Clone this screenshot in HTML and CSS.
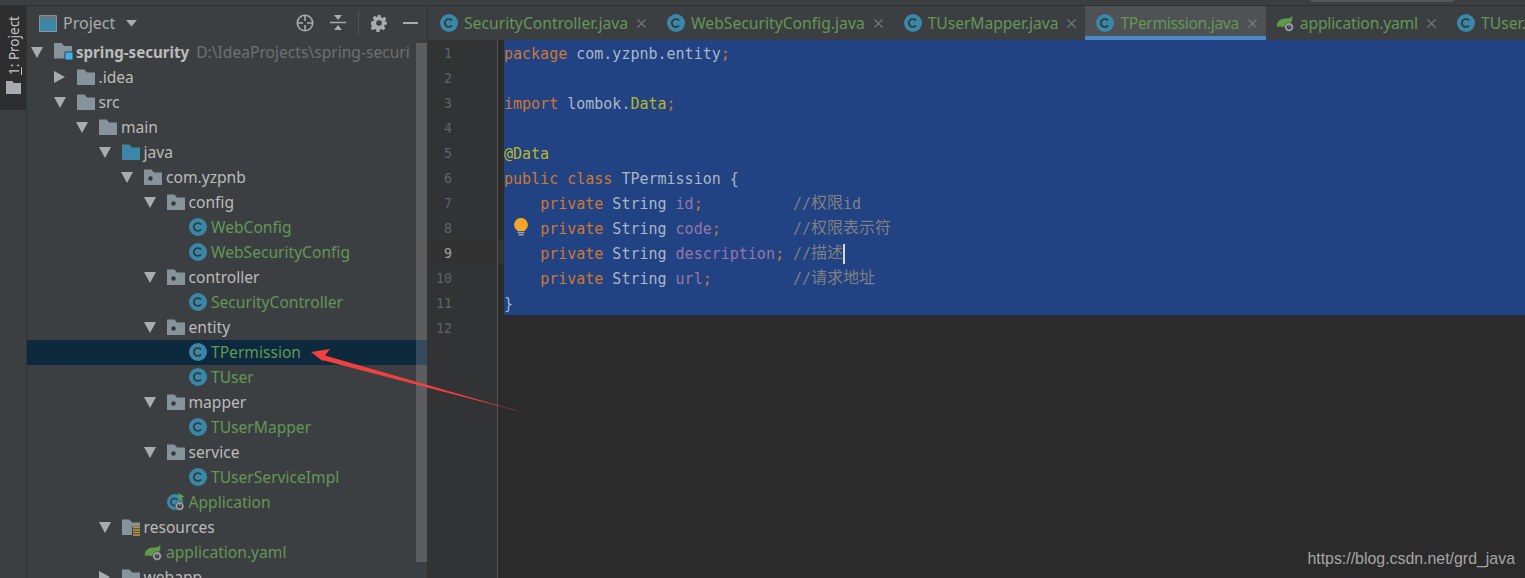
FILE: index.html
```html
<!DOCTYPE html>
<html lang="en">
<head>
<meta charset="utf-8">
<title>TPermission.java</title>
<link rel="stylesheet" href="styles.css">
</head>
<body>
<svg class="defs" width="0" height="0" aria-hidden="true">
  <defs>
    <symbol id="cls" viewBox="0 0 18 18">
      <circle cx="9" cy="9" r="9" fill="#3a87a8"/>
      <path d="M12 6.600A4 4 0 1 0 12 11.400" fill="none" stroke="#2f363a" stroke-width="1.700"/>
    </symbol>
    <symbol id="folder" viewBox="0 0 18 18">
      <path d="M0 1.500h7.500l2.500 3h8v12.500H0z" fill="#87939a"/>
    </symbol>
    <symbol id="folder-blue" viewBox="0 0 18 18">
      <path d="M0 1.500h7.500l2.500 3h8v12.500H0z" fill="#3a87a8"/>
    </symbol>
    <symbol id="pkg" viewBox="0 0 18 18">
      <path d="M0 1.500h7.500l2.500 3h8v12.500H0z" fill="#87939a"/>
      <circle cx="6.500" cy="10.500" r="2.200" fill="#35383a"/>
    </symbol>
    <symbol id="root" viewBox="0 0 20 18">
      <path d="M0 0h7.500l2.500 3h8v12.500H0z" fill="#87939a"/>
      <path d="M11 9h8v8h-8z" fill="#3db5ea" stroke="#3c3f41"/>
    </symbol>
    <symbol id="res" viewBox="0 0 18 18">
      <path d="M0 1.500h7.500l2.500 3h8v12.500H0z" fill="#87939a"/>
      <path d="M10 8.500h8v9h-8z" fill="#3c3f41"/>
      <path d="M11 9.500h7M11 12h7M11 14.500h7M11 17h7" stroke="#c39a3c" stroke-width="1.500"/>
    </symbol>
    <symbol id="gear-badge" viewBox="0 0 10 10">
      <circle cx="5" cy="5" r="4.500" fill="#9aa1a5" stroke="#3c3f41" stroke-width=".6"/>
      <circle cx="5" cy="5" r="2.400" fill="#3c3f41"/>
      <path d="M5 3v2" stroke="#9aa1a5"/>
    </symbol>
    <symbol id="spring" viewBox="0 0 20 20">
      <path d="M1 13C1 7 7 5 11 5s6-1 7-3c1 5-1 8-3 10-3 2-7 3-10 2-2 0-3 0-4 1z" fill="#5d9b47"/>
      <use href="#gear-badge" x="9" y="9" width="11" height="11"/>
    </symbol>
    <symbol id="app" viewBox="0 0 20 20">
      <circle cx="9" cy="10" r="9" fill="#3a87a8"/>
      <path d="M11.500 7.600A4 4 0 1 0 11.500 12.400" fill="none" stroke="#2f363a" stroke-width="1.600"/>
      <path d="M13 0l6 4-6 4z" fill="#59a83c"/>
      <use href="#gear-badge" x="8.500" y="9" width="11" height="11"/>
    </symbol>
    <symbol id="close" viewBox="0 0 10 10">
      <path d="M.5.500l9 9M9.500.500l-9 9" stroke="#7d8082" stroke-width="1.200" fill="none"/>
    </symbol>
  </defs>
</svg>
<div class="app">
  <div class="topline"><div class="topline-bar"></div></div>
  <div class="main">
    <aside class="stripe">
      <div class="stripe-btn">
        <span class="stripe-label"><u>1</u>: Project</span>
        <svg class="stripe-icon" viewBox="0 0 15 13"><path d="M0 0h6l2 2h7v11H0z" fill="#a9acae"/></svg>
      </div>
    </aside>
    <section class="panel">
      <header class="panel-head">
        <svg class="head-proj" viewBox="0 0 18 17"><path d="M.5.500h17v16H.5z" fill="#3a87a8" stroke="#8a9196"/><path d="M1 1h16v3H1z" fill="#6d7478"/></svg>
        <span class="head-title">Project</span>
        <svg class="head-caret" viewBox="0 0 11 7"><path d="M0 0h11L5.500 6.500z" fill="#a9acae"/></svg>
        <span class="head-tools">
          <svg class="tool" viewBox="0 0 18 18"><circle cx="9" cy="9" r="7.700" fill="none" stroke="#a9acae" stroke-width="1.600"/><path d="M9 1v6M9 11v6M1 9h6M11 9h6" stroke="#a9acae" stroke-width="1.600"/></svg>
          <svg class="tool tool-collapse" viewBox="0 0 16 18"><path d="M0 8.500h16" stroke="#a9acae" stroke-width="1.500"/><path d="M4 1h8L8 6zM4 16h8l-4-5z" fill="#a9acae"/></svg>
          <span class="tool-sep"></span>
          <svg class="tool tool-gear" viewBox="0 0 16 16"><path d="M6.500 0h3l.4 2.300 1.500.7 2-1.300 2 2-1.300 2 .6 1.500L16 6.600v2.800l-2.300.4-.6 1.500 1.300 2-2 2-2-1.300-1.500.6-.4 2.400h-3l-.4-2.400-1.500-.6-2 1.300-2-2 1.300-2-.6-1.500L0 9.400V6.600l2.300-.4.6-1.500-1.300-2 2-2 2 1.300 1.500-.7z" fill="#a9acae"/><circle cx="8" cy="8" r="2.800" fill="#3c3f41"/></svg>
          <span class="tool-min"></span>
        </span>
      </header>
      <div class="tree">
        <div class="row l0"><span class="arrow down"></span><svg class="ico ico-root"><use href="#root"/></svg><span class="name bold">spring-security</span><span class="path">D:\IdeaProjects\spring-security</span></div>
        <div class="row l1"><span class="arrow right"></span><svg class="ico"><use href="#folder"/></svg><span class="name">.idea</span></div>
        <div class="row l1"><span class="arrow down"></span><svg class="ico"><use href="#folder"/></svg><span class="name">src</span></div>
        <div class="row l2"><span class="arrow down"></span><svg class="ico"><use href="#folder"/></svg><span class="name">main</span></div>
        <div class="row l3"><span class="arrow down"></span><svg class="ico"><use href="#folder-blue"/></svg><span class="name">java</span></div>
        <div class="row l4"><span class="arrow down"></span><svg class="ico"><use href="#pkg"/></svg><span class="name">com.yzpnb</span></div>
        <div class="row l5"><span class="arrow down"></span><svg class="ico"><use href="#pkg"/></svg><span class="name">config</span></div>
        <div class="row l6"><span class="arrow"></span><svg class="ico"><use href="#cls"/></svg><span class="name new">WebConfig</span></div>
        <div class="row l6"><span class="arrow"></span><svg class="ico"><use href="#cls"/></svg><span class="name new">WebSecurityConfig</span></div>
        <div class="row l5"><span class="arrow down"></span><svg class="ico"><use href="#pkg"/></svg><span class="name">controller</span></div>
        <div class="row l6"><span class="arrow"></span><svg class="ico"><use href="#cls"/></svg><span class="name new">SecurityController</span></div>
        <div class="row l5"><span class="arrow down"></span><svg class="ico"><use href="#pkg"/></svg><span class="name">entity</span></div>
        <div class="row l6 selected"><span class="arrow"></span><svg class="ico"><use href="#cls"/></svg><span class="name new">TPermission</span></div>
        <div class="row l6"><span class="arrow"></span><svg class="ico"><use href="#cls"/></svg><span class="name new">TUser</span></div>
        <div class="row l5"><span class="arrow down"></span><svg class="ico"><use href="#pkg"/></svg><span class="name">mapper</span></div>
        <div class="row l6"><span class="arrow"></span><svg class="ico"><use href="#cls"/></svg><span class="name new">TUserMapper</span></div>
        <div class="row l5"><span class="arrow down"></span><svg class="ico"><use href="#pkg"/></svg><span class="name">service</span></div>
        <div class="row l6"><span class="arrow"></span><svg class="ico"><use href="#cls"/></svg><span class="name new">TUserServiceImpl</span></div>
        <div class="row l5"><span class="arrow"></span><svg class="ico"><use href="#app"/></svg><span class="name new">Application</span></div>
        <div class="row l3"><span class="arrow down"></span><svg class="ico"><use href="#res"/></svg><span class="name">resources</span></div>
        <div class="row l4"><span class="arrow"></span><svg class="ico"><use href="#spring"/></svg><span class="name new">application.yaml</span></div>
        <div class="row l3"><span class="arrow right"></span><svg class="ico"><use href="#folder"/></svg><span class="name">webapp</span></div>
        <div class="scrollbar"></div>
      </div>
    </section>
    <section class="editor">
      <nav class="tabs">
        <div class="tab"><svg class="tab-ico"><use href="#cls"/></svg><span class="tab-name">SecurityController.java</span><svg class="tab-x"><use href="#close"/></svg></div>
        <div class="tab"><svg class="tab-ico"><use href="#cls"/></svg><span class="tab-name">WebSecurityConfig.java</span><svg class="tab-x"><use href="#close"/></svg></div>
        <div class="tab tab-mapper"><svg class="tab-ico"><use href="#cls"/></svg><span class="tab-name">TUserMapper.java</span><svg class="tab-x"><use href="#close"/></svg></div>
        <div class="tab active"><svg class="tab-ico"><use href="#cls"/></svg><span class="tab-name">TPermission.java</span><svg class="tab-x"><use href="#close"/></svg></div>
        <div class="tab tab-yaml"><svg class="tab-ico tab-ico-spring"><use href="#spring"/></svg><span class="tab-name">application.yaml</span><svg class="tab-x"><use href="#close"/></svg></div>
        <div class="tab"><svg class="tab-ico"><use href="#cls"/></svg><span class="tab-name">TUser.java</span></div>
      </nav>
      <div class="body">
        <div class="gutter">
          <div class="num">1</div><div class="num">2</div><div class="num">3</div><div class="num">4</div>
          <div class="num">5</div><div class="num">6</div><div class="num">7</div><div class="num">8</div>
          <div class="num current">9</div><div class="num">10</div><div class="num">11</div><div class="num">12</div>
        </div>
        <div class="strip"><div class="strip-current"></div></div>
        <div class="code">
<div class="sel">
<div class="line"><b class="k">package</b> com.yzpnb.entity<b class="k">;</b></div>
<div class="line"></div>
<div class="line"><b class="k">import</b> lombok.<b class="a">Data</b><b class="k">;</b></div>
<div class="line"></div>
<div class="line"><b class="a">@Data</b></div>
<div class="line"><b class="k">public class</b> TPermission {</div>
<div class="line">    <b class="k">private</b> String <b class="f">id</b><b class="k">;</b>          <b class="c">//<i class="cjk">权限</i>id</b></div>
<div class="line"><svg class="bulb" viewBox="0 0 14 18"><path d="M7 0a6.800 6.800 0 0 1 4 12.300V13H3v-.7A6.800 6.800 0 0 1 7 0z" fill="#f2a72b"/><path d="M3.500 14.500h7M4.500 16.800h5" stroke="#9aa7b0" stroke-width="1.400"/></svg>    <b class="k">private</b> String <b class="f">code</b><b class="k">;</b>        <b class="c">//<i class="cjk">权限表示符</i></b></div>
<div class="line">    <b class="k">private</b> String <b class="f">description</b><b class="k">;</b> <b class="c">//<i class="cjk">描述</i></b><span class="caret"></span></div>
<div class="line">    <b class="k">private</b> String <b class="f">url</b><b class="k">;</b>         <b class="c">//<i class="cjk">请求地址</i></b></div>
<div class="line">}</div>
</div>
<div class="line"></div>
        </div>
      </div>
    </section>
  </div>
  <svg class="pointer" viewBox="0 0 220 70" aria-hidden="true"><path d="M1 3L20 0 15 6.500 215 64 12 11 15 14z" fill="#f43f3f"/></svg>
  <div class="mark">https://blog.csdn.net/grd_java</div>
</div>
</body>
</html>
```
FILE: styles.css
```css
* { box-sizing: border-box; }
html, body { margin: 0; height: 100%; background: #3c3f41; }
.defs { position: absolute; }
.app {
  position: relative;
  width: 1525px;
  height: 578px;
  overflow: hidden;
  display: flex;
  flex-direction: column;
  font-family: "Noto Sans", "Open Sans", sans-serif;
  color: #bbbbbb;
}
.topline {
  height: 6px;
  flex: none;
  display: flex;
  justify-content: flex-end;
  padding-right: 71px;
  border-bottom: 1px solid #323232;
}
.topline-bar { width: 144px; height: 2px; background: #55585a; border-radius: 0 0 3px 3px; }
.main { flex: 1; display: flex; min-height: 0; }

.stripe { width: 27px; flex: none; border-right: 1px solid #323232; }
.stripe-btn {
  width: 26px;
  height: 104px;
  background: #2c2e2f;
  display: flex;
  flex-direction: column;
  align-items: center;
  padding-top: 10px;
  gap: 6px;
}
.stripe-label {
  writing-mode: vertical-rl;
  transform: rotate(180deg);
  font-size: 13.500px;
  line-height: 16px;
  padding-right: 1px;
  color: #c4c4c4;
  white-space: nowrap;
}
.stripe-icon { width: 15px; height: 13px; }

.panel { width: 401px; flex: none; display: flex; flex-direction: column; min-height: 0; border-right: 1px solid #323232; }
.panel-head {
  height: 34px;
  flex: none;
  display: flex;
  align-items: center;
  padding-left: 12px;
}
.head-proj { width: 18px; height: 17px; }
.head-title { margin-left: 6px; font-size: 16px; color: #a9acae; }
.head-caret { width: 11px; height: 7px; margin-left: 11px; }
.head-tools { margin-left: auto; display: flex; align-items: center; padding-right: 9px; }
.tool { width: 18px; height: 18px; margin-right: 16px; }
.tool-collapse { width: 16px; margin-right: 12px; }
.tool-gear { width: 16px; height: 18px; margin-left: 12px; margin-right: 16px; }
.tool-sep { width: 1px; height: 24px; background: #515457; }
.tool-min { width: 15px; height: 2px; background: #a9acae; }

.tree { position: relative; flex: 1; overflow: hidden; }
.row {
  height: 25px;
  display: flex;
  align-items: center;
  font-size: 15.600px;
  white-space: nowrap;
  padding-right: 17px;
  padding-bottom: 2px;
}
.l0 { padding-left: 4px; }
.l1 { padding-left: 26.500px; }
.l2 { padding-left: 49px; }
.l3 { padding-left: 71.500px; }
.l4 { padding-left: 94px; }
.l5 { padding-left: 116.500px; }
.l6 { padding-left: 139px; }
.row.selected { background: #0d293e; }
.arrow { width: 23px; flex: none; display: block; height: 12px; position: relative; }
.arrow.down::before {
  content: "";
  position: absolute;
  left: 0;
  top: 1px;
  border-style: solid;
  border-width: 11px 6px 0;
  border-color: #a9acae transparent transparent;
}
.arrow.right::before {
  content: "";
  position: absolute;
  left: 0;
  top: 0;
  border-style: solid;
  border-width: 6px 0 6px 11px;
  border-color: transparent transparent transparent #a9acae;
}
.ico { width: 18px; height: 18px; flex: none; margin-right: 4px; }
.ico-root { width: 20px; margin-right: 2px; }
.name { color: #bbbbbb; }
.name.bold { font-weight: 700; font-size: 15.100px; }
.name.new { color: #629755; }
.path { margin-left: 7px; color: #6e7072; overflow: hidden; min-width: 0; }
.scrollbar {
  position: absolute;
  right: 0;
  top: 3px;
  width: 11px;
  height: 519px;
  background: rgba(255, 255, 255, .16);
}

.editor { flex: 1; min-width: 0; display: flex; flex-direction: column; background: #2b2b2b; }
.tabs {
  height: 34px;
  flex: none;
  display: flex;
  background: #3c3f41;
  overflow: hidden;
}
.tab {
  flex: none;
  height: 34px;
  display: flex;
  align-items: center;
  padding: 0 0 0 12px;
  font-size: 15.700px;
  white-space: nowrap;
}
.tab.active { background: #4e5254; box-shadow: inset 0 -4px 0 #4a88c7; padding-left: 11px; }
.tab-mapper .tab-name { letter-spacing: -.08px; }
.active .tab-name { letter-spacing: -.37px; }
.tab-yaml .tab-name { letter-spacing: -.19px; }
.tab-ico { width: 18px; height: 18px; flex: none; margin-right: 6px; }
.tab-ico-spring { margin-left: -2px; margin-right: 6px; }
.tab-name { color: #629755; }
.tab-x { width: 9px; height: 9px; flex: none; margin: 0 9px 0 9px; }

.body { flex: 1; display: flex; min-height: 0; }
.gutter { width: 70px; flex: none; background: #313335; border-right: 1px solid #555555; }
.num {
  height: 25px;
  line-height: 27px;
  padding-right: 45px;
  text-align: right;
  font-family: "DejaVu Sans Mono", monospace;
  font-size: 13.200px;
  color: #606366;
}
.num.current { color: #a4a3a3; background: #323232; }
.strip { width: 6px; flex: none; padding-top: 200px; }
.strip-current { height: 25px; background: #323232; }
.code {
  flex: 1;
  min-width: 0;
  font-family: "DejaVu Sans Mono", "Noto Sans CJK SC", monospace;
  font-size: 15px;
  color: #a9b7c6;
}
.sel { background: #214283; }
.line { position: relative; height: 25px; line-height: 29px; white-space: pre; }
.line b { font-weight: 400; }
.k { color: #cc7832; }
.a { color: #bbb529; }
.f { color: #9876aa; }
.c { color: #808080; }
.cjk { font-style: normal; font-size: 16px; line-height: 1; vertical-align: 1px; }
.bulb { position: absolute; left: 10px; top: 3px; width: 14px; height: 18px; }
.caret { display: inline-block; width: 2px; height: 20px; background: #d8d8d8; vertical-align: -5px; }

.pointer { position: absolute; left: 310px; top: 349px; width: 220px; height: 70px; }
.mark {
  position: absolute;
  right: 10px;
  bottom: 9px;
  font-family: "Liberation Sans", Arial, sans-serif;
  font-size: 15.900px;
  line-height: 20px;
  color: #a5a5a5;
}
```
